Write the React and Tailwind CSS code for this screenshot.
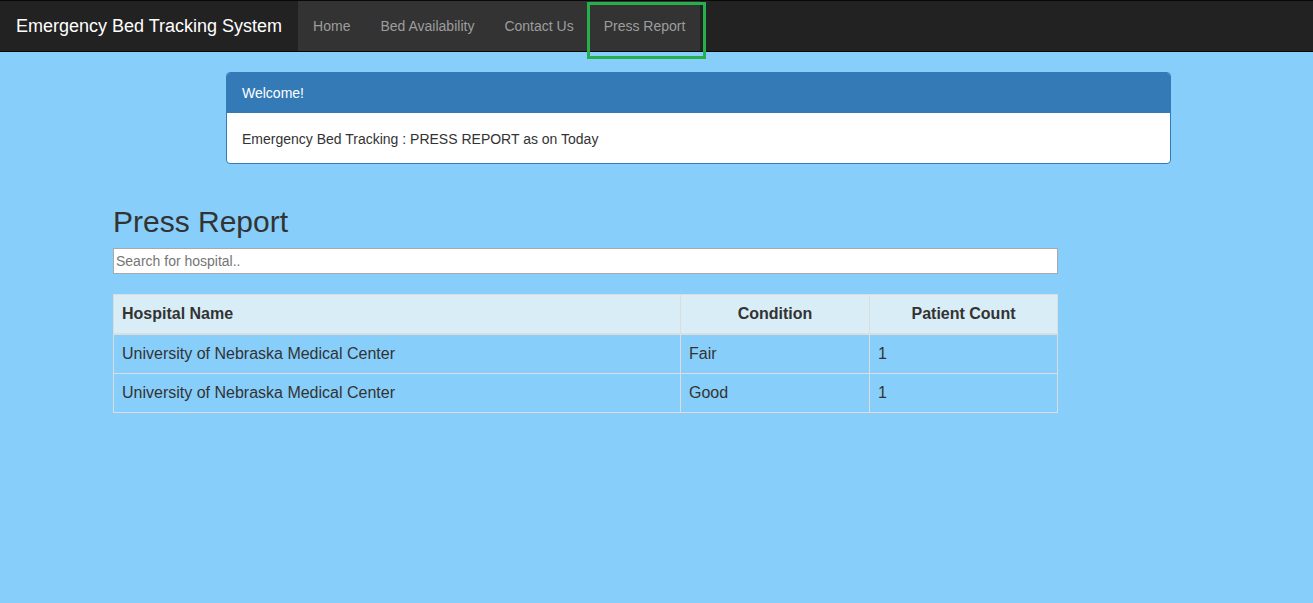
import React from "react";

const rows = [
  { name: "University of Nebraska Medical Center", condition: "Fair", count: 1 },
  { name: "University of Nebraska Medical Center", condition: "Good", count: 1 },
];

function NavBar() {
  const links = ["Home", "Bed Availability", "Contact Us", "Press Report"];
  return (
    <nav className="relative h-[52px] border-y border-[#080808] bg-[#222]">
      <div className="flex h-[50px]">
        <a className="px-[16px] py-[15px] text-[18px] leading-[20px] text-white">
          Emergency Bed Tracking System
        </a>
        <ul className="flex bg-[#333]">
          {links.map((l) => (
            <li key={l}>
              <a className="block px-[15px] py-[15px] text-[14px] leading-[20px] text-[#9d9d9d]">
                {l}
              </a>
            </li>
          ))}
        </ul>
      </div>
      <div className="pointer-events-none absolute left-[587px] top-[1px] h-[57px] w-[119px] border-[3px] border-[#25b04b]" />
    </nav>
  );
}

function App() {
  return (
    <div
      className="min-h-[603px] bg-[#87cefa] text-[14px] leading-[20px] text-[#333]"
      style={{ fontFamily: '"Liberation Sans", Arial, sans-serif' }}
    >
      <NavBar />
      <div className="ml-[226px] mt-[20px] w-[945px] overflow-hidden rounded-[4px] border border-[#337ab7] bg-white">
        <div className="bg-[#337ab7] px-[15px] pt-[10px] pb-[10px] text-white">Welcome!</div>
        <div className="px-[15px] pt-[16px] pb-[14px]">Emergency Bed Tracking : PRESS REPORT as on Today</div>
      </div>
      <div className="ml-[113px] w-[945px]">
        <h2 className="mt-[41px] mb-[10px] text-[30px] leading-[33px]">Press Report</h2>
        <input
          type="text"
          placeholder="Search for hospital.."
          className="block h-[26px] w-full border border-[#a9a9a9] bg-white px-[2px] text-[14px] placeholder:text-[#757575]"
          style={{ fontFamily: '"Liberation Sans", Arial, sans-serif' }}
        />
        <table className="mt-[20px] w-full border-collapse border border-[#ddd] text-[16px] leading-[22px]">
          <thead>
            <tr className="bg-[#d9edf7]">
              <th className="border border-b-2 border-[#ddd] p-[8px] text-left font-bold">Hospital Name</th>
              <th className="w-[189px] border border-b-2 border-[#ddd] p-[8px] text-center font-bold">Condition</th>
              <th className="w-[188px] border border-b-2 border-[#ddd] p-[8px] text-center font-bold">Patient Count</th>
            </tr>
          </thead>
          <tbody>
            {rows.map((r, i) => (
              <tr key={i}>
                <td className="border border-[#ddd] p-[8px]">{r.name}</td>
                <td className="border border-[#ddd] p-[8px]">{r.condition}</td>
                <td className="border border-[#ddd] p-[8px]">{r.count}</td>
              </tr>
            ))}
          </tbody>
        </table>
      </div>
    </div>
  );
}

export default App;
